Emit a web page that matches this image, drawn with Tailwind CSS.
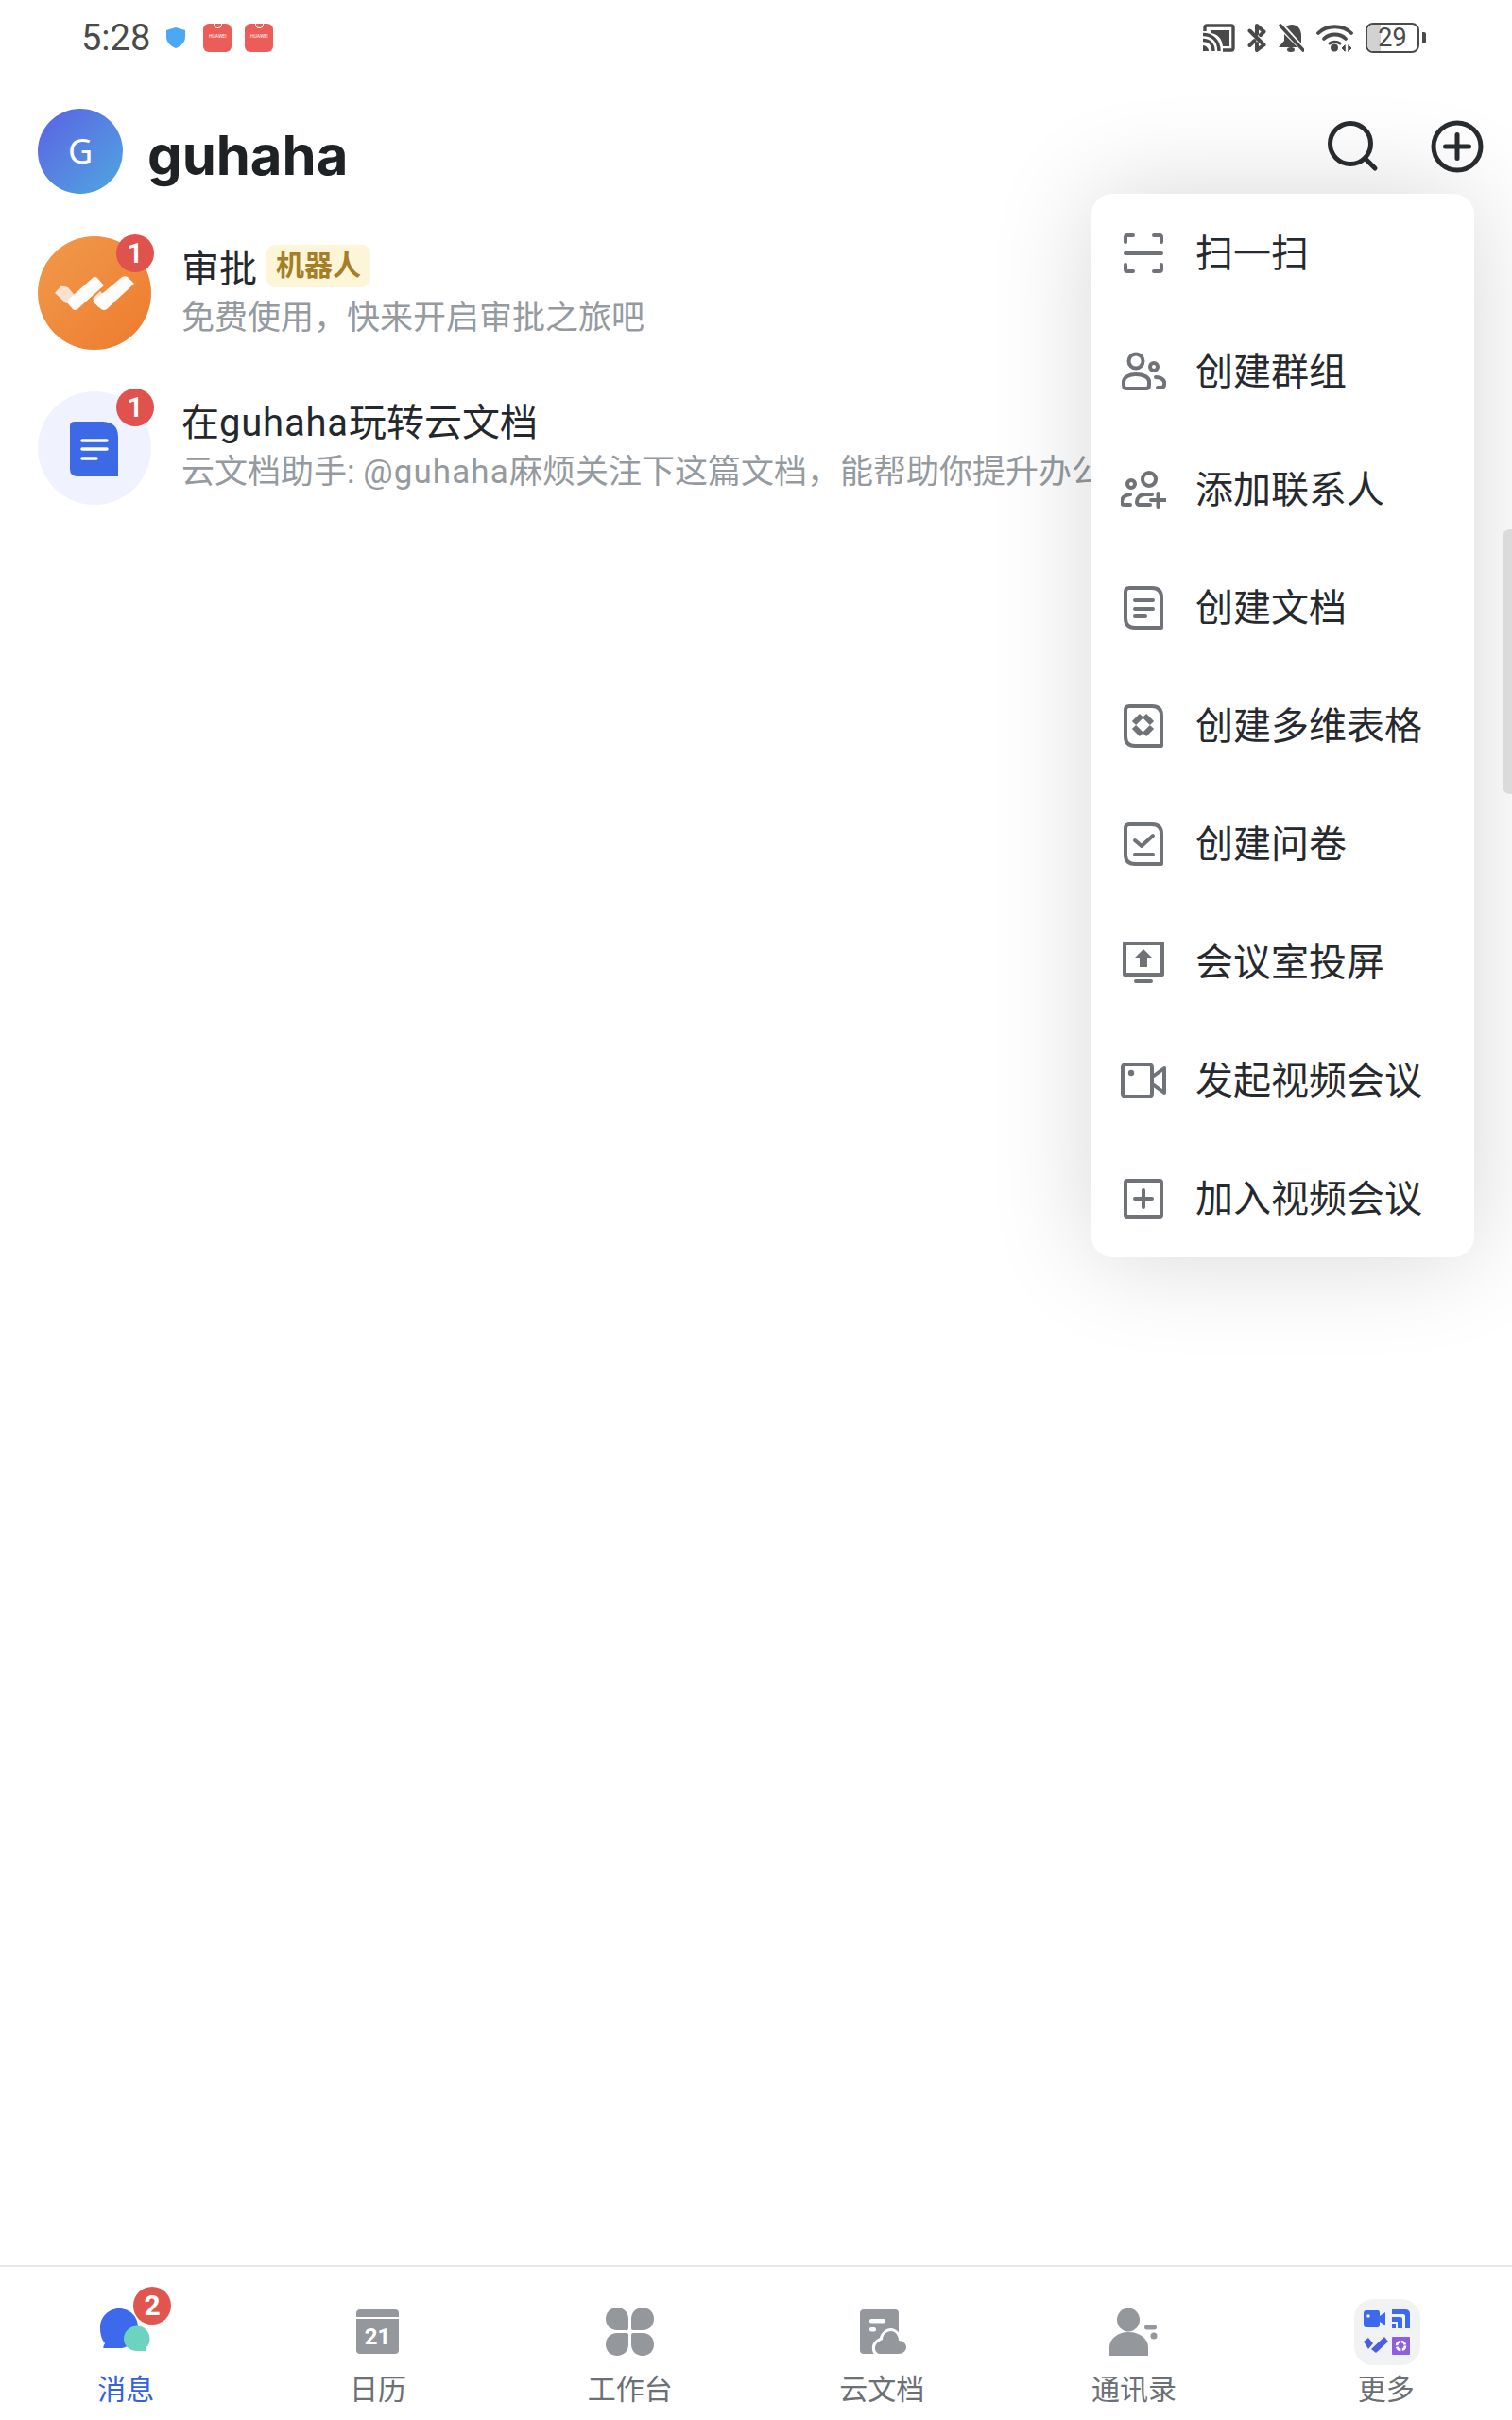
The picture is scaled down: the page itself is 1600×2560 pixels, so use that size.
<!DOCTYPE html>
<html lang="zh-CN">
<head>
    <meta charset="UTF-8">
    <meta name="viewport" content="width=device-width, initial-scale=1.0">
    <title>guhaha</title>
    <script src="https://cdn.jsdelivr.net/npm/@tailwindcss/browser@4"></script>
</head>
<body class="bg-white [font-family:Roboto,'Noto_Sans_CJK_SC',sans-serif]">
<div class="relative w-[1600px] h-[2560px] overflow-hidden flex flex-col bg-white">

    <!-- status bar -->
    <div class="h-[80px] shrink-0 flex items-center pl-[86px] pr-[91px] text-[#4a4a4a]">
        <span class="text-[38px] leading-none">5:28</span>
        <svg class="ml-[17px]" width="20" height="22" viewBox="0 0 20 22"><path d="M10 0 L20 3 V10 C20 16 15 20 10 22 C5 20 0 16 0 10 V3 Z" fill="#4aa8f5"/></svg>
        <div class="ml-[19px] w-[30px] h-[30px] rounded-[6px] bg-[#ec5c58] flex flex-col items-center">
            <div class="w-[9px] h-[5px] border-b border-x border-white rounded-b-[5px]"></div>
            <span class="text-[5px] leading-[6px] mt-[5px] text-white">HUAWEI</span>
        </div>
        <div class="ml-[14px] w-[30px] h-[30px] rounded-[6px] bg-[#ec5c58] flex flex-col items-center">
            <div class="w-[9px] h-[5px] border-b border-x border-white rounded-b-[5px]"></div>
            <span class="text-[5px] leading-[6px] mt-[5px] text-white">HUAWEI</span>
        </div>
        <div class="ml-auto flex items-center">
            <!-- cast -->
            <svg width="34" height="30" viewBox="0 0 34 30" fill="none">
                <path d="M2 8 V4 Q2 2 4 2 H30 Q32 2 32 4 V26 Q32 28 30 28 H21" stroke="#4a4a4a" stroke-width="3.4"/>
                <path d="M8 7 H28 V24 H21 C20 16 16 11 8 10 Z" fill="#4a4a4a"/>
                <path d="M0 11.5 C10 11.5 17 18 17 29 M0 17.5 C7 17.5 11 22 11 29" stroke="#4a4a4a" stroke-width="3.4"/>
                <path d="M0 23 C3 23 6 26 6 29 H0 Z" fill="#4a4a4a"/>
            </svg>
            <!-- bluetooth -->
            <svg class="ml-[13px]" width="20" height="30" viewBox="0 0 20 30" fill="none" stroke="#4a4a4a" stroke-width="4" stroke-linejoin="round" stroke-linecap="round">
                <path d="M2.5 7.5 L17.5 22.5 L10 28 V21"/><path d="M2.5 23 L7.5 18"/><path d="M10 11 V2 L17.5 8.5 L14 12"/>
            </svg>
            <!-- muted bell -->
            <svg class="ml-[13px]" width="27" height="30" viewBox="0 0 27 30" fill="#4a4a4a">
                <path d="M8 3 C13 -1 24 0 24 13 V21 Z"/>
                <path d="M6 11 L20 25 H0 L6 18 Z"/>
                <ellipse cx="13" cy="27.5" rx="4" ry="2.5"/>
                <path d="M2 2 L26 28" stroke="#4a4a4a" stroke-width="3.6" stroke-linecap="round"/>
            </svg>
            <!-- wifi -->
            <svg class="ml-[13px]" width="39" height="30" viewBox="0 0 39 30" fill="none" stroke="#4a4a4a" stroke-width="3.8" stroke-linecap="round">
                <path d="M2 10 C11 1 28 1 37 10"/><path d="M8 16 C14 10 25 10 31 16"/><path d="M14 21 C17 18.500 22 18.500 25 21" stroke-width="3"/>
                <circle cx="19" cy="25.500" r="4" fill="#4a4a4a" stroke="none"/>
                <path d="M30 23 L27 26 L30 29 Z M34 23 L37 26 L34 29 Z" fill="#4a4a4a" stroke-width="1"/>
            </svg>
            <!-- battery -->
            <div class="ml-[13px] relative w-[57px] h-[32px] rounded-[8px] border-[2px] border-[#4a4a4a] overflow-hidden flex items-center justify-center">
                <div class="absolute left-0 top-0 bottom-0 w-[14px] bg-[#d2d2d2]"></div>
                <span class="relative text-[27px] leading-none text-[#4a4a4a]">29</span>
            </div>
            <div class="ml-[3px] w-[4px] h-[12px] rounded-r-[2px] bg-[#4a4a4a]"></div>
        </div>
    </div>

    <!-- header -->
    <div class="h-[170px] shrink-0 pl-[40px] pr-[30px] pt-[35px] flex items-start">
        <div class="w-[90px] h-[90px] rounded-full bg-gradient-to-br from-[#5b5fe2] to-[#4da6e0] flex items-center justify-center text-white text-[36px] [font-family:'Noto_Sans',sans-serif]">G</div>
        <span class="ml-[26px] mt-[13px] text-[58px] leading-[72px] font-bold text-[#1f2225] [font-family:Inter,sans-serif]">guhaha</span>
        <div class="ml-auto flex mt-[12px]">
            <svg width="56" height="56" viewBox="0 0 56 56" fill="none" stroke="#2a2d30" stroke-width="5" stroke-linecap="round">
                <circle cx="25" cy="25" r="21.5"/><path d="M41 41 L51 51"/>
            </svg>
            <svg class="ml-[54px]" width="56" height="56" viewBox="0 0 56 56" fill="none" stroke="#2a2d30" stroke-width="5" stroke-linecap="round">
                <circle cx="28" cy="28" r="25"/><path d="M15.5 28 H40.5 M28 15.5 V40.5"/>
            </svg>
        </div>
    </div>

    <!-- chat list -->
    <div class="flex-1 flex flex-col">
        <div class="h-[163px] flex pl-[40px]">
            <div class="relative w-[120px] h-[120px] rounded-full bg-gradient-to-br from-[#f09a4c] to-[#ee7a2c] shrink-0">
                <svg class="absolute left-0 top-0" width="120" height="120" viewBox="0 0 120 120">
                    <path d="M18 60 L24 53 Q26 52 32 54 L42 66 L30 71 Z" fill="#f9e3d0"/>
                    <path d="M58 66 L66 58 L74 66 L64 75 Z" fill="#f9e3d0"/>
                    <path d="M30 69 L58 44 Q60 42 63 44 L70 52 L42 77 Q39 79 37 77 Z" fill="#fff" fill-opacity="0.97"/>
                    <path d="M58 69 L88 44 Q91 41 95 43 L102 50 L73 77 Q70 79 67 77 Z" fill="#fff" fill-opacity="0.97"/>
                </svg>
                <span class="absolute left-[83px] top-[-2px] w-[40px] h-[40px] rounded-full bg-[#e0524d] text-white text-[30px] font-semibold flex items-center justify-center leading-none">1</span>
            </div>
            <div class="ml-[32px] mt-[1px] h-[120px] flex flex-col justify-center whitespace-nowrap">
                <div class="h-[52px] flex items-center">
                    <span class="text-[40px] text-[#24272b] leading-[52px]">审批</span>
                    <span class="ml-[10px] mb-[8px] h-[45px] px-[10px] rounded-[9px] bg-[#fdf5d8] text-[#a57e26] text-[30px] leading-[43px] font-semibold">机器人</span>
                </div>
                <div class="h-[52px] text-[35px] leading-[52px] text-[#959a9f]">免费使用，快来开启审批之旅吧</div>
            </div>
        </div>
        <div class="h-[163px] flex pl-[40px]">
            <div class="relative w-[120px] h-[120px] rounded-full bg-[#f0f3fe] shrink-0 mt-[1px]">
                <svg class="absolute left-0 top-0" width="120" height="120" viewBox="0 0 120 120">
                    <path d="M39 32 H69 Q85 33 85 48 V90 H42 Q34 90 34 82 V37 Q34 32 39 32 Z" fill="#3c6ae6"/>
                    <path d="M47 52 H73 M47 61 H73 M47 71 H62" stroke="#fff" stroke-width="3.500" stroke-linecap="round"/>
                </svg>
                <span class="absolute left-[83px] top-[-3px] w-[40px] h-[40px] rounded-full bg-[#e0524d] text-white text-[30px] font-semibold flex items-center justify-center leading-none">1</span>
            </div>
            <div class="ml-[32px] mt-[1px] h-[120px] flex flex-col justify-center whitespace-nowrap">
                <div class="h-[52px] text-[40px] leading-[52px] text-[#24272b]">在<span class="tracking-[0.8px]">guhaha</span>玩转云文档</div>
                <div class="h-[52px] text-[35px] leading-[52px] text-[#959a9f]">云文档助手: <span class="tracking-[1.1px]">@guhaha</span>麻烦关注下这篇文档，能帮助你提升办公效率哦</div>
            </div>
        </div>
    </div>

    <!-- bottom tabs -->
    <div class="h-[164px] shrink-0 border-t-2 border-[#e6e7e9] flex pt-[29px]">
        <div class="relative flex-1 flex flex-col items-center">
            <svg width="80" height="80" viewBox="0 0 80 80">
                <path d="M33 15 C45 15 53 24 53 35 C53 47 44 56 36 57 H17 Q15 57 18 52 C14 47 13 41 13 35 C13 24 22 15 33 15 Z" fill="#3d69ec"/>
                <path d="M52 33.500 C59.500 33.500 65.500 39.500 65.500 47 C65.500 51 64 54 62 56 Q63 60 61 60 H52 C44 60 38 54.500 38 47 C38 39.500 44.500 33.500 52 33.500 Z" fill="#6bd3c0"/>
            </svg>
            <span class="absolute left-[141px] top-[-8px] w-[40px] h-[40px] rounded-full bg-[#e0564e] text-white text-[30px] font-bold flex items-center justify-center leading-none">2</span>
            <span class="h-[40px] mt-[1px] text-[30px] leading-[40px] text-[#3560e0]">消息</span>
        </div>
        <div class="flex-1 flex flex-col items-center">
            <svg width="80" height="80" viewBox="0 0 80 80">
                <path d="M17 24 V20 Q17 16 21 16 H58 Q62 16 62 20 V24 Z" fill="#94979c"/>
                <path d="M17 26 H62 V59 Q62 63 58 63 H21 Q17 63 17 59 Z" fill="#94979c"/>
                <text x="39.500" y="53" text-anchor="middle" font-size="24" font-weight="700" fill="#fff" font-family="Roboto, sans-serif">21</text>
            </svg>
            <span class="h-[40px] mt-[1px] text-[30px] leading-[40px] text-[#6c6f74]">日历</span>
        </div>
        <div class="flex-1 flex flex-col items-center">
            <svg width="80" height="80" viewBox="0 0 80 80" fill="#94979c">
                <path d="M26 14 C33 14 38 19 38 26 V36 Q38 38 36 38 H26 C19 38 14 33 14 26 C14 19 19 14 26 14 Z"/>
                <path d="M53 14 C60 14 65 19 65 26 C65 33 60 38 53 38 H43 Q41 38 41 36 V26 C41 19 46 14 53 14 Z"/>
                <path d="M26 65 C33 65 38 60 38 53 V43 Q38 41 36 41 H26 C19 41 14 46 14 53 C14 60 19 65 26 65 Z"/>
                <path d="M53 65 C60 65 65 60 65 53 C65 46 60 41 53 41 H43 Q41 41 41 43 V53 C41 60 46 65 53 65 Z"/>
            </svg>
            <span class="h-[40px] mt-[1px] text-[30px] leading-[40px] text-[#6c6f74]">工作台</span>
        </div>
        <div class="flex-1 flex flex-col items-center">
            <svg width="80" height="80" viewBox="0 0 80 80">
                <rect x="17" y="16" width="41" height="47" rx="4" fill="#94979c"/>
                <rect x="27" y="26" width="17" height="4.500" rx="2" fill="#fff"/>
                <rect x="27" y="35" width="7" height="4.500" rx="2" fill="#fff"/>
                <path d="M38 66 H58 C64 66 69 62 69 56 C69 51 65 47 61 47 C60 41 55 36 50 36 C44 36 39 41 38 46 C33 48 29 53 30 58 C30 62 33 66 38 66 Z" fill="#fff"/>
                <path d="M39 63 H58 C62 63 66 60 66 56 C66 52 62 49 58 49 C58 43 54 39 50 39 C45 39 41 43 41 48 C36 50 33 53 33 57 C33 61 36 63 39 63 Z" fill="#94979c"/>
            </svg>
            <span class="h-[40px] mt-[1px] text-[30px] leading-[40px] text-[#6c6f74]">云文档</span>
        </div>
        <div class="flex-1 flex flex-col items-center">
            <svg width="80" height="80" viewBox="0 0 80 80" fill="#94979c">
                <ellipse cx="34" cy="27" rx="12" ry="12.500"/>
                <path d="M14 65 V56 C14 47 23 40 34 40 C46 40 55 47 55 56 V65 Z"/>
                <rect x="51" y="32.500" width="13" height="5" rx="2.500"/>
                <circle cx="61" cy="44" r="3.500"/>
            </svg>
            <span class="h-[40px] mt-[1px] text-[30px] leading-[40px] text-[#6c6f74]">通讯录</span>
        </div>
        <div class="flex-1 flex flex-col items-center">
            <svg width="80" height="80" viewBox="0 0 80 80">
                <rect x="6" y="5" width="70" height="70" rx="20" fill="#f1f2f4"/>
                <path d="M16 20 Q16 17 19 17 H31 Q33 17 33 20 V23 L39 19 V33 L33 29 V32 Q33 35 31 35 H19 Q16 35 16 32 Z" fill="#3d69ec"/>
                <circle cx="21" cy="23" r="1.800" fill="#f1f2f4"/>
                <path d="M46 16 H60 Q65 16 65 21 V36 H60 V23 Q60 21 58 21 H46 Z M46 24 H55 Q57 24 57 26 V36 H52 V29 H46 Z M46 31 H50 V36 H46 Z" fill="#3d69ec"/>
                <path d="M16 50 L21 46 L26 52 L21 58 Z" fill="#4a5fe0"/>
                <path d="M24 58 L38 45 L42 50 L29 62 Z" fill="#4a5fe0"/>
                <rect x="46" y="45" width="19" height="19" rx="1" fill="#8f5ee0"/>
                <circle cx="55.500" cy="54.500" r="4.500" fill="none" stroke="#fff" stroke-width="2.600" stroke-dasharray="5.500 1.500"/>
            </svg>
            <span class="h-[40px] mt-[1px] text-[30px] leading-[40px] text-[#6c6f74]">更多</span>
        </div>
    </div>

    <!-- scrollbar -->
    <div class="absolute right-0 top-[560px] w-[10px] h-[280px] rounded-l-[8px] bg-[#e4e4e4]"></div>

    <!-- plus menu -->
    <div class="absolute left-[1155px] top-[205px] w-[405px] h-[1125px] rounded-[22px] bg-white shadow-[0_0_110px_rgba(0,0,0,0.16)] flex flex-col text-[40px] text-[#26292d] whitespace-nowrap">
        <div class="h-[125px] flex items-center pl-[31px]">
            <svg width="48" height="48" viewBox="0 0 48 48" fill="none" stroke="#6f7277" stroke-width="4" stroke-linecap="round" stroke-linejoin="round">
                <path d="M13 5 H7 Q5 5 5 7 V12 M35 5 H41 Q43 5 43 7 V12 M13 43 H7 Q5 43 5 41 V36 M35 43 H41 Q43 43 43 41 V36 M5 24 H43"/>
            </svg>
            <span class="ml-[31px] mt-[3px] leading-[52px]">扫一扫</span>
        </div>
        <div class="h-[125px] flex items-center pl-[31px]">
            <svg width="48" height="48" viewBox="0 0 48 48" fill="none" stroke="#6f7277" stroke-width="4" stroke-linecap="round">
                <circle cx="16" cy="13" r="7.500"/>
                <path d="M3 38 V35 C3 30 9 27 16 27 C24 27 30 30 30 35 V38 C30 41 29 42 27 42 H6 C4 42 3 41 3 38 Z"/>
                <circle cx="35" cy="19" r="4"/>
                <path d="M37 30 C44 30 47 34 46 38 C46 40 45 41 42 41 H39"/>
            </svg>
            <span class="ml-[31px] mt-[3px] leading-[52px]">创建群组</span>
        </div>
        <div class="h-[125px] flex items-center pl-[31px]">
            <svg width="48" height="48" viewBox="0 0 48 48" fill="none" stroke="#6f7277" stroke-width="4" stroke-linecap="round">
                <circle cx="30" cy="13" r="7"/>
                <circle cx="11" cy="18" r="4"/>
                <path d="M33 29 H26 C20 29 17 33 17 37 C17 39 18 40 20 40 H31"/>
                <path d="M10 29 C4 30 1 33 1 37 C1 39 2 40 4 40 H10"/>
                <path d="M32 35 H47 M39.500 28 V42"/>
            </svg>
            <span class="ml-[31px] mt-[3px] leading-[52px]">添加联系人</span>
        </div>
        <div class="h-[125px] flex items-center pl-[31px]">
            <svg width="48" height="48" viewBox="0 0 48 48" fill="none" stroke="#6f7277" stroke-width="4" stroke-linecap="round" stroke-linejoin="round">
                <path d="M9 3 H33 Q43 3 43 13 V45 H15 Q5 45 5 35 V7 Q5 3 9 3 Z"/>
                <path d="M15 16 H34 M15 25 H34 M15 33 H26"/>
            </svg>
            <span class="ml-[31px] mt-[3px] leading-[52px]">创建文档</span>
        </div>
        <div class="h-[125px] flex items-center pl-[31px]">
            <svg width="48" height="48" viewBox="0 0 48 48" fill="none" stroke="#6f7277" stroke-width="4" stroke-linejoin="round">
                <path d="M9 3 H33 Q43 3 43 13 V45 H15 Q5 45 5 35 V7 Q5 3 9 3 Z"/>
                <path d="M14 21 L22 13 M25 13 L33 21 M14 25 L22 33 M25 33 L33 25" stroke-width="6"/>
            </svg>
            <span class="ml-[31px] mt-[3px] leading-[52px]">创建多维表格</span>
        </div>
        <div class="h-[125px] flex items-center pl-[31px]">
            <svg width="48" height="48" viewBox="0 0 48 48" fill="none" stroke="#6f7277" stroke-width="4" stroke-linecap="round" stroke-linejoin="round">
                <path d="M9 3 H33 Q43 3 43 13 V45 H15 Q5 45 5 35 V7 Q5 3 9 3 Z"/>
                <path d="M15 20 L22 26 L34 15 M15 35 H34"/>
            </svg>
            <span class="ml-[31px] mt-[3px] leading-[52px]">创建问卷</span>
        </div>
        <div class="h-[125px] flex items-center pl-[31px]">
            <svg width="48" height="48" viewBox="0 0 48 48" fill="none" stroke="#6f7277" stroke-width="4" stroke-linecap="round" stroke-linejoin="round">
                <path d="M4 4 H44 V37 H4 Z"/>
                <path d="M24 10 L33 19 H28 V29 H20 V19 H15 Z" fill="#6f7277" stroke="none"/>
                <path d="M16 44 H32"/>
            </svg>
            <span class="ml-[31px] mt-[3px] leading-[52px]">会议室投屏</span>
        </div>
        <div class="h-[125px] flex items-center pl-[31px]">
            <svg width="48" height="48" viewBox="0 0 48 48" fill="none" stroke="#6f7277" stroke-width="4" stroke-linecap="round" stroke-linejoin="round">
                <rect x="2" y="7" width="31" height="34" rx="3"/>
                <path d="M35 19 L46 11 V37 L35 29"/>
                <circle cx="11" cy="16" r="3.200" fill="#6f7277" stroke="none"/>
            </svg>
            <span class="ml-[31px] mt-[3px] leading-[52px]">发起视频会议</span>
        </div>
        <div class="h-[125px] flex items-center pl-[31px]">
            <svg width="48" height="48" viewBox="0 0 48 48" fill="none" stroke="#6f7277" stroke-width="4" stroke-linecap="round" stroke-linejoin="round">
                <rect x="5" y="5" width="38" height="38" rx="2"/>
                <path d="M15 24 H33 M24 15 V33"/>
            </svg>
            <span class="ml-[31px] mt-[3px] leading-[52px]">加入视频会议</span>
        </div>
    </div>
</div>
</body>
</html>
